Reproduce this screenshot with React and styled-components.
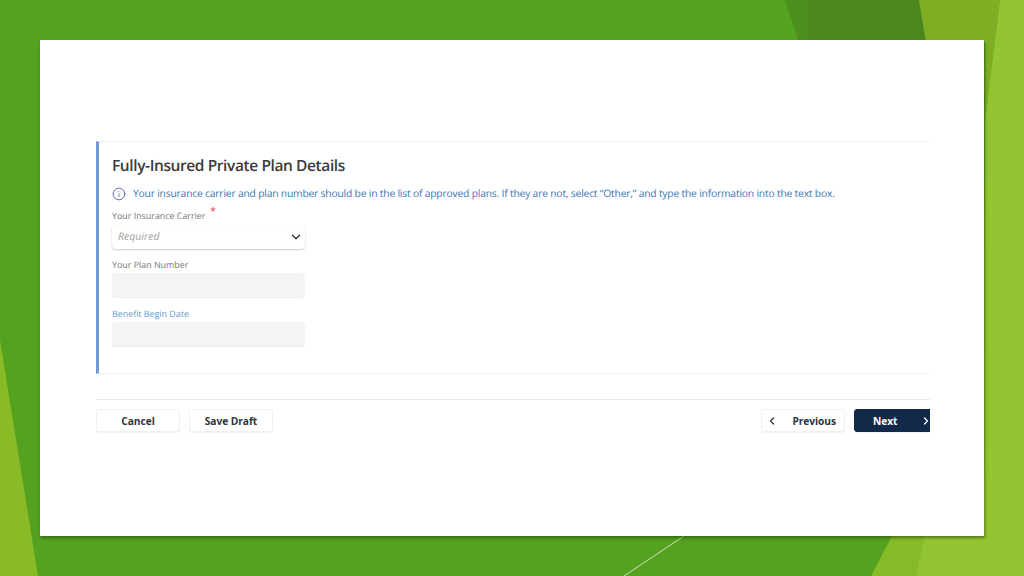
import React from "react";
import styled, { createGlobalStyle } from "styled-components";
import { ChevronDown, ChevronLeft, ChevronRight, Info } from "lucide-react";

const Global = createGlobalStyle`
  html, body { margin: 0; padding: 0; }
  body { font-family: "Open Sans", "Noto Sans", sans-serif; text-rendering: geometricPrecision; }
`;

const Slide = styled.div`
  position: relative;
  width: 1024px;
  height: 576px;
  box-sizing: border-box;
  padding: 40px;
  background: #55a120;
  overflow: hidden;
`;

const Backdrop = styled.svg`
  position: absolute;
  inset: 0;
`;

const Card = styled.main`
  position: relative;
  height: 496px;
  box-sizing: border-box;
  padding: 101px 54px 0 56px;
  background: #fff;
  box-shadow: 1px 2px 3px rgba(30, 60, 10, 0.55);
  display: flex;
  flex-direction: column;
`;

const Form = styled.div`
  overflow: hidden;
  padding-bottom: 4px;
`;

const Section = styled.section`
  height: 233px;
  box-sizing: border-box;
  padding: 12px 0 0 13px;
  border-left: 3px solid #6f9bd1;
  border-top: 1px solid #efefef;
  border-bottom: 1px solid #efefef;
`;

const Title = styled.h2`
  margin: 0;
  font-size: 15.5px;
  line-height: 22px;
  font-weight: 600;
  color: #3a3a3a;
  letter-spacing: -0.4px;
`;

const Notice = styled.div`
  display: flex;
  align-items: center;
  gap: 7px;
  margin-top: 9px;
  height: 18px;
  font-size: 10.3px;
  letter-spacing: -0.19px;
  color: #3a76b4;
  white-space: nowrap;
`;

const Field = styled.div`
  width: 193px;
  margin-top: ${(p) => p.$top}px;
`;

const Label = styled.label`
  display: block;
  position: relative;
  height: 14px;
  font-size: 8.9px;
  line-height: 14px;
  color: ${(p) => (p.$accent ? "#5b9bcf" : "#757575")};
`;

const Star = styled.span`
  position: absolute;
  left: 98px;
  top: -4px;
  font-size: 11px;
  color: #dc4a58;
`;

const Select = styled.div`
  height: 24px;
  margin-top: 2px;
  box-sizing: border-box;
  padding: 0 2px 0 6px;
  display: flex;
  align-items: center;
  justify-content: space-between;
  background: #fff;
  border-radius: 4px;
  box-shadow: 0 1px 2px rgba(0, 0, 0, 0.2), 0 0 1px rgba(0, 0, 0, 0.08);
  font-size: 10.5px;
  font-style: italic;
  color: #a3a3a3;
`;

const ReadOnly = styled.div`
  height: 24px;
  margin-top: 1px;
  background: #f4f4f4;
  border-radius: 4px;
  box-shadow: 0 1px 1px rgba(0, 0, 0, 0.08);
`;

const Footer = styled.footer`
  margin-top: 25px;
  border-top: 1px solid #e8e8e8;
  padding-top: 9px;
  display: flex;
  align-items: flex-start;
  justify-content: space-between;
`;

const Group = styled.div`
  display: flex;
  gap: ${(p) => p.$gap}px;
  margin-right: ${(p) => p.$bleed || 0}px;
`;

const Button = styled.button`
  width: ${(p) => p.$w}px;
  flex: none;
  height: 23px;
  box-sizing: border-box;
  padding: 0 ${(p) => p.$pad || 0}px;
  display: flex;
  align-items: center;
  justify-content: ${(p) => (p.$pad ? "space-between" : "center")};
  border: 1px solid ${(p) => (p.$primary ? "#12294a" : "#f0f0f0")};
  border-radius: 3px;
  background: ${(p) => (p.$primary ? "#12294a" : "#fff")};
  color: ${(p) => (p.$primary ? "#fff" : "#2c3440")};
  font-family: inherit;
  font-size: 10.2px;
  font-weight: 700;
  letter-spacing: -0.05px;
  box-shadow: 0 1px 1px rgba(0, 0, 0, 0.05);
`;

const PrevText = styled.span`
  margin-right: 4px;
`;

const NextText = styled.span`
  margin-left: 13px;
`;

export default function App() {
  return (
    <>
      <Global />
      <Slide>
        <Backdrop width="1024" height="576" viewBox="0 0 1024 576">
          <polygon points="785,0 920,0 926,42 799,42" fill="#4b871d" />
          <polygon points="785,0 808,0 808,42 799,42" fill="#4e9020" />
          <polygon points="919,0 1000,0 985,120 985,42 926,42" fill="#7fae24" />
          <polygon points="1000,0 1024,0 1024,576 916,576 920,530 984,530 985,120" fill="#93c532" />
          <polygon points="893,534 925,534 916,576 871,576" fill="#86bb28" />
          <polygon points="0,340 38,576 0,576" fill="#88bb26" />
          <line x1="684" y1="536" x2="624" y2="576" stroke="#cfe6b0" strokeWidth="1" />
        </Backdrop>
        <Card>
          <Form>
            <Section>
              <Title>Fully-Insured Private Plan Details</Title>
              <Notice>
                <Info size={14} strokeWidth={1.5} color="#4a5fa8" />
                Your insurance carrier and plan number should be in the list of approved plans. If they are not, select “Other,” and type the information into the text box.
              </Notice>
              <Field $top={6}>
                <Label>
                  Your Insurance Carrier<Star>*</Star>
                </Label>
                <Select>
                  Required
                  <ChevronDown size={14} strokeWidth={2.4} color="#333" />
                </Select>
              </Field>
              <Field $top={9}>
                <Label>Your Plan Number</Label>
                <ReadOnly />
              </Field>
              <Field $top={10}>
                <Label $accent>Benefit Begin Date</Label>
                <ReadOnly />
              </Field>
            </Section>
            <Footer>
              <Group $gap={9}>
                <Button $w={84}>Cancel</Button>
                <Button $w={84}>Save Draft</Button>
              </Group>
              <Group $gap={9} $bleed={-8}>
                <Button $w={84} $pad={4}>
                  <ChevronLeft size={12} strokeWidth={2.6} />
                  <PrevText>Previous</PrevText>
                </Button>
                <Button $w={84} $pad={5} $primary>
                  <NextText>Next</NextText>
                  <ChevronRight size={12} strokeWidth={2.6} />
                </Button>
              </Group>
            </Footer>
          </Form>
        </Card>
      </Slide>
    </>
  );
}
